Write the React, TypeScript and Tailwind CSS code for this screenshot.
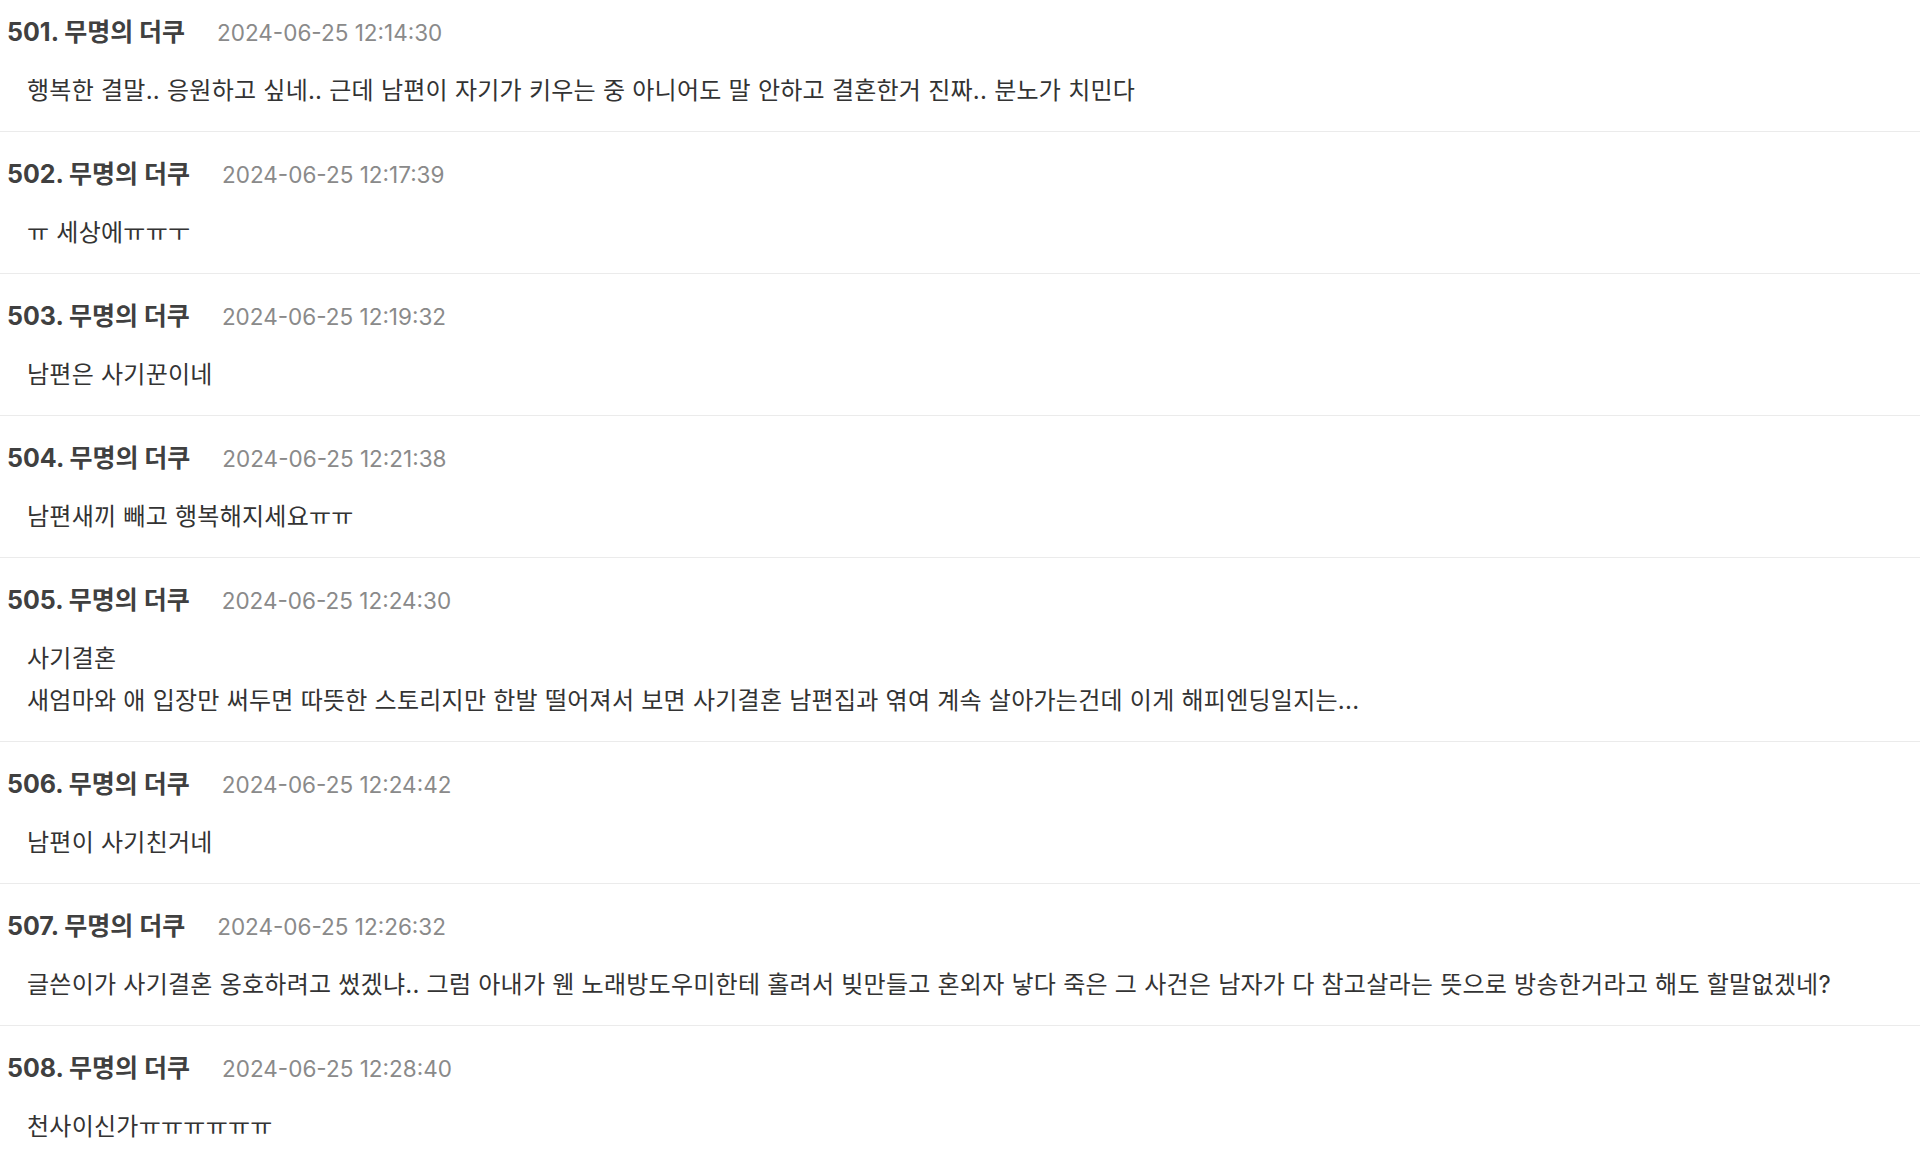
import React from 'react';

type Comment = {
  no: number;
  date: string;
  lines: string[];
};

const comments: Comment[] = [
  {
    no: 501,
    date: '2024-06-25 12:14:30',
    lines: ['행복한 결말.. 응원하고 싶네.. 근데 남편이 자기가 키우는 중 아니어도 말 안하고 결혼한거 진짜.. 분노가 치민다'],
  },
  { no: 502, date: '2024-06-25 12:17:39', lines: ['ㅠ 세상에ㅠㅠㅜ'] },
  { no: 503, date: '2024-06-25 12:19:32', lines: ['남편은 사기꾼이네'] },
  { no: 504, date: '2024-06-25 12:21:38', lines: ['남편새끼 빼고 행복해지세요ㅠㅠ'] },
  {
    no: 505,
    date: '2024-06-25 12:24:30',
    lines: [
      '사기결혼',
      '새엄마와 애 입장만 써두면 따뜻한 스토리지만 한발 떨어져서 보면 사기결혼 남편집과 엮여 계속 살아가는건데 이게 해피엔딩일지는...',
    ],
  },
  { no: 506, date: '2024-06-25 12:24:42', lines: ['남편이 사기친거네'] },
  {
    no: 507,
    date: '2024-06-25 12:26:32',
    lines: [
      '글쓴이가 사기결혼 옹호하려고 썼겠냐.. 그럼 아내가 웬 노래방도우미한테 홀려서 빚만들고 혼외자 낳다 죽은 그 사건은 남자가 다 참고살라는 뜻으로 방송한거라고 해도 할말없겠네?',
    ],
  },
  { no: 508, date: '2024-06-25 12:28:40', lines: ['천사이신가ㅠㅠㅠㅠㅠㅠ'] },
];

const CommentRow: React.FC<{ c: Comment }> = ({ c }) => {
  return (
    <li className="border-b border-[#ebebeb] pt-[26px] pb-[19px]">
      {/* 번호 + 닉네임 + 작성시간 */}
      <div className="flex items-baseline h-[32px] leading-[32px] pl-[7px]">
        <span className="text-[25px] font-bold text-[#404040]">
          {c.no}. 무명의 더쿠
        </span>
        <span className="ml-[32px] text-[22.5px] text-[#8a8a8a]">{c.date}</span>
      </div>

      {/* 본문 */}
      <div className="mt-[22px] pl-[27px] text-[24px] leading-[42px] text-[#333333] tracking-[0.25px]">
        {c.lines.map((line, i) => (
          <p key={i}>{line}</p>
        ))}
      </div>
    </li>
  );
};

export default function App() {
  return (
    <div
      className="w-[1920px] h-[1160px] overflow-hidden bg-white"
      style={{ fontFamily: "Inter, 'Noto Sans CJK KR', sans-serif" }}
    >
      <ul className="-mt-[10px]">
        {comments.map((c) => (
          <CommentRow key={c.no} c={c} />
        ))}
      </ul>
    </div>
  );
}
